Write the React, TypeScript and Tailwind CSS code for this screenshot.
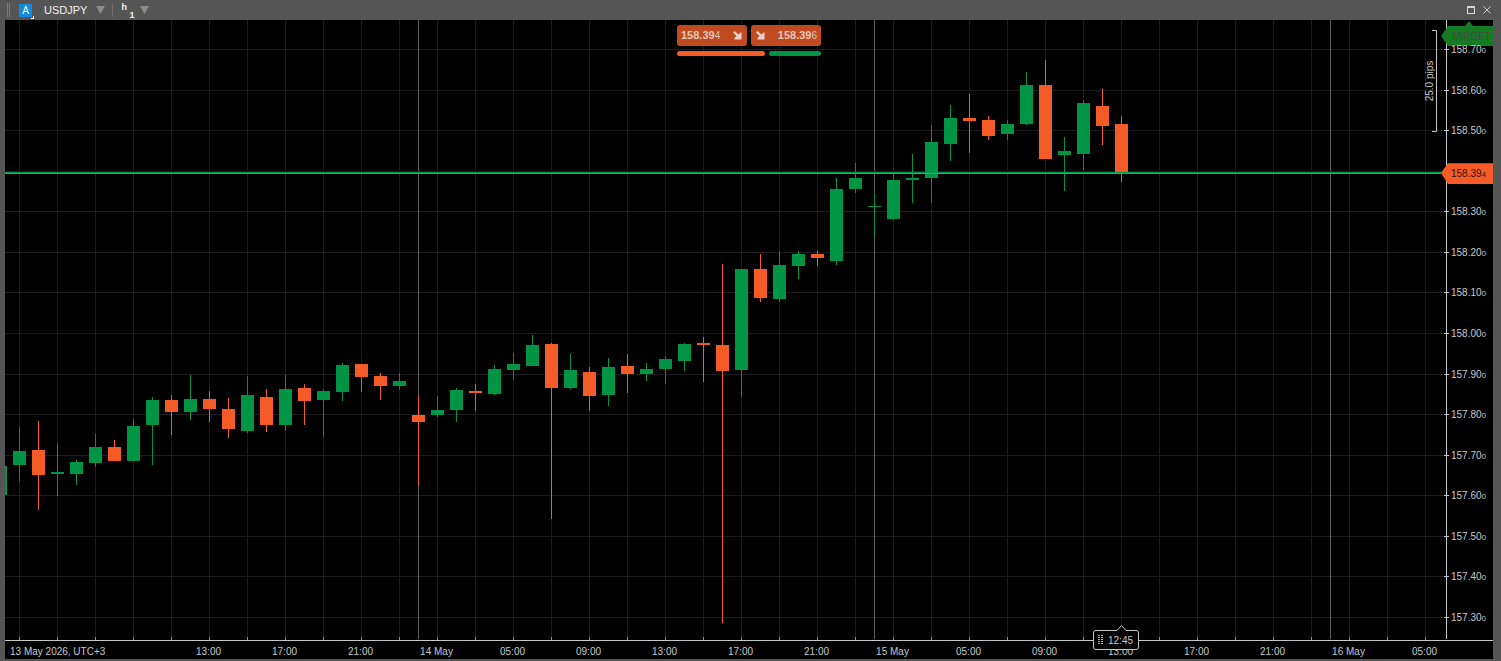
const UP = "#009544";
const DOWN = "#f55b26";
const MONO = "'Liberation Sans', Arial, sans-serif";

// [up?, bodyTop, bodyBottom, wickTop, wickBottom]
const candles: [number, number, number, number, number][] = [
  [1, 451, 465, 427, 482],
  [0, 450, 475, 421, 510],
  [1, 472, 474, 443, 496],
  [1, 462, 474, 460, 485],
  [1, 447, 463, 434, 467],
  [0, 447, 461, 440, 461],
  [1, 426, 461, 419, 461],
  [1, 400, 425, 397, 465],
  [0, 400, 412, 395, 435],
  [1, 399, 412, 375, 420],
  [0, 399, 409, 391, 422],
  [0, 409, 429, 398, 438],
  [1, 395, 431, 376, 433],
  [0, 397, 425, 389, 432],
  [1, 389, 425, 375, 431],
  [0, 388, 401, 384, 425],
  [1, 391, 400, 389, 437],
  [1, 365, 392, 363, 401],
  [0, 364, 377, 364, 392],
  [0, 376, 386, 373, 400],
  [1, 381, 386, 373, 390],
  [0, 415, 422, 395, 486],
  [1, 410, 415, 396, 417],
  [1, 390, 410, 388, 422],
  [0, 391, 393, 384, 411],
  [1, 369, 394, 365, 395],
  [1, 364, 370, 353, 380],
  [1, 345, 366, 335, 366],
  [0, 344, 388, 343, 519],
  [1, 370, 388, 354, 389],
  [0, 372, 396, 367, 411],
  [1, 367, 395, 358, 406],
  [0, 366, 374, 354, 393],
  [1, 369, 374, 363, 381],
  [1, 359, 369, 356, 384],
  [1, 344, 361, 343, 371],
  [0, 343, 345, 337, 382],
  [0, 345, 371, 264, 623],
  [1, 269, 370, 269, 397],
  [0, 269, 298, 254, 302],
  [1, 265, 299, 251, 302],
  [1, 254, 266, 251, 279],
  [0, 254, 258, 251, 266],
  [1, 189, 261, 178, 265],
  [1, 178, 189, 163, 193],
  [1, 206, 207, 194, 238],
  [1, 180, 219, 174, 220],
  [1, 178, 180, 154, 203],
  [1, 142, 178, 125, 203],
  [1, 118, 144, 105, 161],
  [0, 118, 121, 94, 153],
  [0, 120, 136, 116, 140],
  [1, 124, 134, 120, 140],
  [1, 85, 124, 72, 125],
  [0, 85, 159, 60, 159],
  [1, 151, 155, 137, 191],
  [1, 103, 154, 100, 170],
  [0, 106, 126, 89, 145],
  [0, 124, 172, 116, 182],
];

const priceLabels = [
  [49, "158.70"], [90, "158.60"], [130, "158.50"], [211, "158.30"],
  [252, "158.20"], [292, "158.10"], [333, "158.00"], [374, "157.90"],
  [414, "157.80"], [455, "157.70"], [495, "157.60"], [536, "157.50"],
  [576, "157.40"], [617, "157.30"],
] as const;

const hLines = [49, 90, 130, 171, 211, 252, 292, 333, 374, 414, 455, 495, 536, 576, 617];

const timeLabels: [number, string][] = [
  [209, "13:00"], [285, "17:00"], [361, "21:00"], [437, "14 May"], [513, "05:00"], [589, "09:00"],
  [665, "13:00"], [741, "17:00"], [817, "21:00"], [893, "15 May"], [969, "05:00"], [1045, "09:00"],
  [1121, "13:00"], [1197, "17:00"], [1273, "21:00"], [1349, "16 May"], [1425, "05:00"],
];

const vLines = Array.from({ length: 38 }, (_, i) => 19 + 38 * i);

function Chart() {
  return (
    <svg viewBox="5 20 1488 639" width={1488} height={639} className="block" style={{ fontFamily: MONO }}>
      <rect x={5} y={20} width={1488} height={639} fill="#000" />
      {vLines.map((x) => (
        <line key={x} x1={x + 0.5} x2={x + 0.5} y1={20} y2={639} stroke="#1c1c20" strokeWidth={1} />
      ))}
      {hLines.map((y) => (
        <line key={y} x1={5} x2={1446} y1={y + 0.5} y2={y + 0.5} stroke="#1c1c20" strokeWidth={1} />
      ))}
      {[418, 874, 1330].map((x) => (
        <line key={x} x1={x + 0.5} x2={x + 0.5} y1={20} y2={639} stroke="#5c5c5c" strokeWidth={1} />
      ))}

      {/* partial first candle */}
      <rect x={5} y={466} width={2} height={29} fill={UP} />
      {candles.map(([up, bt, bb, wt, wb], i) => {
        const x = 19 + 19 * i;
        const c = up ? UP : DOWN;
        return (
          <g key={i}>
            <rect x={x} y={wt} width={1} height={wb - wt} fill={c} />
            <rect x={x - 6} y={bt} width={13} height={Math.max(bb - bt, 1)} fill={c} />
          </g>
        );
      })}

      {/* current price line */}
      <rect x={5} y={172} width={1436} height={1} fill="#009a4a" />
      <rect x={5} y={173} width={1436} height={1} fill="#c9692f" />

      {/* right axis */}
      <rect x={1446} y={20} width={1} height={619} fill="#c8c8c8" />
      {hLines.map((y) => (
        <rect key={y} x={1444} y={y} width={5} height={1} fill="#c8c8c8" />
      ))}

      {/* target tag */}
      <path d="M1441 36L1448 26H1465L1469 21L1473 26H1493V46H1448Z" fill="#157a22" />
      <text x={1451} y={40} fontSize={10} fill="#3f4f3f">TARGET</text>

      {priceLabels.map(([y, a]) => (
        <text key={y} x={1451} y={y + 4} fontSize={10} fill="#c8c8c8">
          {a}
          <tspan fontSize={8}>0</tspan>
        </text>
      ))}

      {/* pips bracket */}
      <path d="M1432 30.5H1436.5V131.5H1432" fill="none" stroke="#c8c8c8" strokeWidth={1} />
      <text x={0} y={0} fontSize={10} fill="#c8c8c8" textAnchor="middle" transform="translate(1433 81) rotate(-90)">
        25.0 pips
      </text>

      {/* price tag */}
      <path d="M1441 173L1448 163H1493V184H1448Z" fill="#f55b26" />
      <path d="M1448 163.5H1493" stroke="#0d9a4a" strokeWidth={1} />
      <text x={1451} y={177} fontSize={10} fill="#3a1206">
        158.39<tspan fontSize={8}>4</tspan>
      </text>

      {/* bottom axis */}
      <rect x={5} y={640} width={1488} height={1} fill="#c8c8c8" />
      {vLines.map((x) => (
        <rect key={x} x={x} y={637} width={1} height={3} fill="#8a8a8a" />
      ))}
      <text x={10} y={655} fontSize={10} fill="#c8c8c8">13 May 2026, UTC+3</text>
      {timeLabels.map(([x, t], i) => (
        <text key={i} x={x - 0.5} y={655} fontSize={10} fill="#c8c8c8" textAnchor="middle">{t}</text>
      ))}

      {/* cursor time tag */}
      <path
        d="M1096 630.5H1117L1121.5 625.5L1126 630.5H1136A2.5 2.5 0 0 1 1138.5 633V647A2.5 2.5 0 0 1 1136 649.5H1096A2.5 2.5 0 0 1 1093.5 647V633A2.5 2.5 0 0 1 1096 630.5Z"
        fill="#000"
        stroke="#c8c8c8"
        strokeWidth={1}
      />
      {[635, 637, 639, 641, 643].map((y) => (
        <g key={y} fill="#b0b0b0">
          <rect x={1098} y={y} width={2} height={1} />
          <rect x={1101} y={y} width={2} height={1} />
        </g>
      ))}
      <text x={1108} y={644} fontSize={10} fill="#c8c8c8">12:45</text>
    </svg>
  );
}

function Arrow() {
  return (
    <svg width={9} height={9} viewBox="0 0 9 9" className="shrink-0">
      <path d="M0 1.5L1.5 0L5.5 3.5L7.5 1.5L8.5 1.5V8.5H1.5V7L3.5 5Z" fill="#e6d2c8" />
    </svg>
  );
}

function QuotePill({ value, small, flip }: { value: string; small: string; flip?: boolean }) {
  return (
    <div className="flex h-[21px] w-[70px] items-center justify-between rounded-[3px] bg-[#c14a20] px-1 text-[11px] font-bold text-[#e0c6ba]">
      {flip ? <span className="ml-px"><Arrow /></span> : null}
      <span>
        {value}
        <span className="text-[10px] font-normal">{small}</span>
      </span>
      {flip ? null : <span className="mr-px"><Arrow /></span>}
    </div>
  );
}

export default function App() {
  return (
    <div
      className="flex h-[661px] w-[1501px] flex-col overflow-hidden bg-[#555555]"
      style={{ fontFamily: MONO }}
    >
      <header className="flex h-5 shrink-0 items-center text-[11px] text-[#f0f0f0]">
        <div className="ml-[7px] flex h-[14px] w-[3px] gap-px">
          <span className="w-px bg-[#7a7a7a]" />
          <span className="w-px bg-[#7a7a7a]" />
        </div>
        <div className="relative ml-[9px] flex h-[13px] w-[13px] items-center justify-center bg-[#0f8ce0] text-[10px] text-white">
          A
          <span className="absolute -bottom-[2px] -right-[2px] h-[3px] w-[3px] border-b border-r border-white" />
        </div>
        <span className="ml-3">USDJPY</span>
        <svg width={9} height={8} viewBox="0 0 9 8" className="ml-[9px]">
          <path d="M0 0H9L4.5 8Z" fill="#8c8c8c" />
        </svg>
        <span className="ml-[7px] h-[13px] w-px bg-[#6e6e6e]" />
        <span className="relative ml-2 h-5 w-[19px] font-bold">
          <span className="absolute left-0 top-[1px] text-[9px]">h</span>
          <span className="absolute left-[8px] top-[9px] text-[9px]">1</span>
        </span>
        <svg width={9} height={8} viewBox="0 0 9 8">
          <path d="M0 0H9L4.5 8Z" fill="#8c8c8c" />
        </svg>
        <div className="ml-auto mr-[10px] flex items-center gap-[8px]">
          <svg width={8} height={8} viewBox="0 0 8 8">
            <rect x={0.5} y={0.5} width={7} height={7} fill="none" stroke="#d5d5d5" />
            <rect x={0} y={0} width={8} height={2} fill="#d5d5d5" />
          </svg>
          <svg width={8} height={8} viewBox="0 0 8 8">
            <path d="M0.5 0.5L7.5 7.5M7.5 0.5L0.5 7.5" stroke="#c8c8c8" strokeWidth={1} />
          </svg>
        </div>
      </header>
      <main className="relative ml-[5px] mr-2 h-[639px]">
        <Chart />
        <div className="absolute left-[672px] top-[5px] flex w-[144px] flex-col gap-[5px]">
          <div className="flex justify-between">
            <QuotePill value="158.39" small="4" />
            <QuotePill value="158.39" small="6" flip />
          </div>
          <div className="flex gap-1">
            <span className="h-[5px] w-[88px] rounded-full bg-[#f55b26]" />
            <span className="h-[5px] w-[52px] rounded-full bg-[#009544]" />
          </div>
        </div>
      </main>
    </div>
  );
}
